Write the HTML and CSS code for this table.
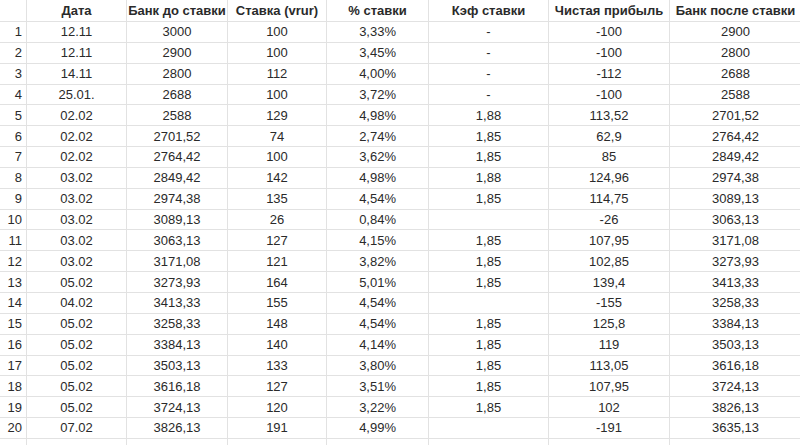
FILE: index.html
```html
<!DOCTYPE html>
<html lang="ru">
<head>
<meta charset="utf-8">
<link rel="stylesheet" href="styles.css">
</head>
<body>
<div class="sheet">
  <div class="c n"></div><div class="c h">Дата</div><div class="c h">Банк до ставки</div><div class="c h">Ставка (vrur)</div><div class="c h">% ставки</div><div class="c h">Кэф ставки</div><div class="c h">Чистая прибыль</div><div class="c h">Банк после ставки</div>
  <div class="c n">1</div><div class="c">12.11</div><div class="c">3000</div><div class="c">100</div><div class="c p">3,33%</div><div class="c">-</div><div class="c">-100</div><div class="c">2900</div>
  <div class="c n">2</div><div class="c">12.11</div><div class="c">2900</div><div class="c">100</div><div class="c p">3,45%</div><div class="c">-</div><div class="c">-100</div><div class="c">2800</div>
  <div class="c n">3</div><div class="c">14.11</div><div class="c">2800</div><div class="c">112</div><div class="c p">4,00%</div><div class="c">-</div><div class="c">-112</div><div class="c">2688</div>
  <div class="c n">4</div><div class="c">25.01.</div><div class="c">2688</div><div class="c">100</div><div class="c p">3,72%</div><div class="c">-</div><div class="c">-100</div><div class="c">2588</div>
  <div class="c n">5</div><div class="c">02.02</div><div class="c">2588</div><div class="c">129</div><div class="c p">4,98%</div><div class="c">1,88</div><div class="c">113,52</div><div class="c">2701,52</div>
  <div class="c n">6</div><div class="c">02.02</div><div class="c">2701,52</div><div class="c">74</div><div class="c p">2,74%</div><div class="c">1,85</div><div class="c">62,9</div><div class="c">2764,42</div>
  <div class="c n">7</div><div class="c">02.02</div><div class="c">2764,42</div><div class="c">100</div><div class="c p">3,62%</div><div class="c">1,85</div><div class="c">85</div><div class="c">2849,42</div>
  <div class="c n">8</div><div class="c">03.02</div><div class="c">2849,42</div><div class="c">142</div><div class="c p">4,98%</div><div class="c">1,88</div><div class="c">124,96</div><div class="c">2974,38</div>
  <div class="c n">9</div><div class="c">03.02</div><div class="c">2974,38</div><div class="c">135</div><div class="c p">4,54%</div><div class="c">1,85</div><div class="c">114,75</div><div class="c">3089,13</div>
  <div class="c n">10</div><div class="c">03.02</div><div class="c">3089,13</div><div class="c">26</div><div class="c p">0,84%</div><div class="c"></div><div class="c">-26</div><div class="c">3063,13</div>
  <div class="c n">11</div><div class="c">03.02</div><div class="c">3063,13</div><div class="c">127</div><div class="c p">4,15%</div><div class="c">1,85</div><div class="c">107,95</div><div class="c">3171,08</div>
  <div class="c n">12</div><div class="c">03.02</div><div class="c">3171,08</div><div class="c">121</div><div class="c p">3,82%</div><div class="c">1,85</div><div class="c">102,85</div><div class="c">3273,93</div>
  <div class="c n">13</div><div class="c">05.02</div><div class="c">3273,93</div><div class="c">164</div><div class="c p">5,01%</div><div class="c">1,85</div><div class="c">139,4</div><div class="c">3413,33</div>
  <div class="c n">14</div><div class="c">04.02</div><div class="c">3413,33</div><div class="c">155</div><div class="c p">4,54%</div><div class="c"></div><div class="c">-155</div><div class="c">3258,33</div>
  <div class="c n">15</div><div class="c">05.02</div><div class="c">3258,33</div><div class="c">148</div><div class="c p">4,54%</div><div class="c">1,85</div><div class="c">125,8</div><div class="c">3384,13</div>
  <div class="c n">16</div><div class="c">05.02</div><div class="c">3384,13</div><div class="c">140</div><div class="c p">4,14%</div><div class="c">1,85</div><div class="c">119</div><div class="c">3503,13</div>
  <div class="c n">17</div><div class="c">05.02</div><div class="c">3503,13</div><div class="c">133</div><div class="c p">3,80%</div><div class="c">1,85</div><div class="c">113,05</div><div class="c">3616,18</div>
  <div class="c n">18</div><div class="c">05.02</div><div class="c">3616,18</div><div class="c">127</div><div class="c p">3,51%</div><div class="c">1,85</div><div class="c">107,95</div><div class="c">3724,13</div>
  <div class="c n">19</div><div class="c">05.02</div><div class="c">3724,13</div><div class="c">120</div><div class="c p">3,22%</div><div class="c">1,85</div><div class="c">102</div><div class="c">3826,13</div>
  <div class="c n">20</div><div class="c">07.02</div><div class="c">3826,13</div><div class="c">191</div><div class="c p">4,99%</div><div class="c"></div><div class="c">-191</div><div class="c">3635,13</div>
  <div class="c n"></div><div class="c"></div><div class="c"></div><div class="c"></div><div class="c"></div><div class="c"></div><div class="c"></div><div class="c"></div>
</div>
</body>
</html>
```

FILE: styles.css
```css
html, body {
  margin: 0;
  padding: 0;
  background: #ffffff;
  overflow: hidden;
}

.sheet {
  display: grid;
  grid-template-columns: 27px 100px 101px 99px 102px 120px 121px 132px;
  grid-template-rows: 22px repeat(20, 20.85px) 20px;
  font-family: "Liberation Sans", Arial, sans-serif;
  font-size: 13px;
  color: #2a2a2a;
}

.c {
  box-sizing: border-box;
  border-right: 1px solid #e2e2e2;
  border-bottom: 1px solid #e2e2e2;
  display: flex;
  align-items: center;
  justify-content: center;
  white-space: nowrap;
  line-height: 1;
}

.h {
  font-weight: bold;
}

.n {
  justify-content: flex-end;
  padding-right: 4px;
}

.p {
  justify-content: flex-end;
  padding-right: 32px;
}
```
